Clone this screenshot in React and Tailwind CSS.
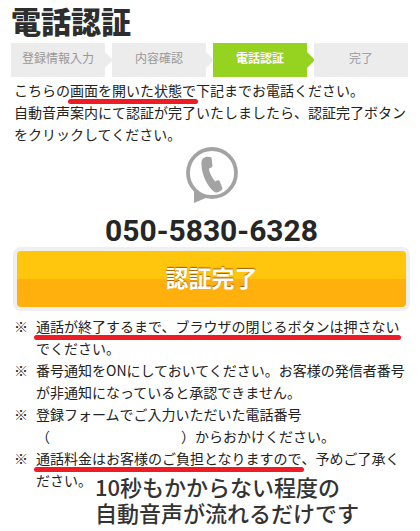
import React from 'react'

const steps = [
    { label: '登録情報入力', active: false },
    { label: '内容確認', active: false },
    { label: '電話認証', active: true },
    { label: '完了', active: false },
]

// text with a thick red marker line under it
function Marked({ children }) {
    return (
        <span className="relative inline-block">
            {children}
            <span className="absolute -left-0.5 -right-0.5 -bottom-[3px] h-[5px] rounded-full bg-[#ee1c25]" />
        </span>
    )
}

function Note({ children }) {
    return (
        <li className="flex">
            <span className="w-[22px] shrink-0">※</span>
            <p className="flex-1">{children}</p>
        </li>
    )
}

function PhoneIcon() {
    return (
        <svg viewBox="0 0 52 56" className="w-[52px] h-14" aria-hidden="true">
            <path d="M8 42 L8 56 L22 50 Z" fill="#a3a3a3" />
            <circle cx="26" cy="26" r="24" fill="#fff" stroke="#a3a3a3" strokeWidth="3.8" />
            <path
                d="M17.5 11 C19.5 9.6 23.5 9.4 25.5 10.4 L26.5 19 C26 20.4 24.6 21 22.8 21.6 C23.5 26 26 31 29.2 34.6 C30.6 33.6 32 33 33.4 33.6 L36.6 41.6 C35.2 44.4 32 46 29 45.2 C21 40.4 15.4 26.4 15.4 16.5 C15.4 14 16 12.2 17.5 11 Z"
                fill="#a3a3a3"
            />
        </svg>
    )
}

export default function App() {
    return (
        <main className="bg-white pl-[11px] pr-3 pt-0.5 text-sm leading-[22px] text-[#222] font-['Noto_Sans_CJK_JP',sans-serif]">
            <h1 className="h-[41px] text-[30px] leading-9 font-black text-[#2e2e2e]">電話認証</h1>

            <ol className="grid grid-cols-4 gap-[7px]">
                {steps.map((step, i) => (
                    <li
                        key={step.label}
                        aria-current={step.active ? 'step' : undefined}
                        className={`relative h-[34px] text-center text-xs leading-[30px] ${
                            step.active ? 'bg-[#96d220] font-bold text-white' : 'bg-[#ececec] text-[#999]'
                        }`}
                    >
                        {step.label}
                        {i < steps.length - 1 && (
                            <span
                                className={`absolute left-full top-[9px] border-y-8 border-l-8 border-y-transparent ${
                                    step.active ? 'border-l-[#96d220]' : 'border-l-[#ececec]'
                                }`}
                            />
                        )}
                    </li>
                ))}
            </ol>

            <div className="mt-0.5 pl-[3px]">
                <p>
                    こちらの<Marked>画面を開いた状態で</Marked>下記までお電話ください。
                </p>
                <p>自動音声案内にて認証が完了いたしましたら、認証完了ボタンをクリックしてください。</p>
            </div>

            <div className="mt-0.5 flex flex-col items-center pl-1">
                <PhoneIcon />
                <p className="mt-2.5 text-[30px] leading-9 font-bold text-[#262626] font-[Roboto,sans-serif]">
                    050-5830-6328
                </p>
            </div>

            <button
                type="button"
                className="ml-0.5 -mt-0.5 flex h-16 w-full items-center justify-center rounded-lg border-4 border-[#efefef] bg-[linear-gradient(#ffc60d_50%,#ffb00d_50%)] bg-origin-border pb-1 text-[23px] font-bold text-white [text-shadow:0_-1px_1px_#a85c00]"
            >
                認証完了
            </button>

            <ul className="mt-1 pl-[3px]">
                <Note>
                    <Marked>通話が終了するまで、ブラウザの閉じるボタンは押さない</Marked>でください。
                </Note>
                <Note>番号通知をONにしておいてください。お客様の発信者番号が非通知になっていると承認できません。</Note>
                <Note>
                    登録フォームでご入力いただいた電話番号
                    <br />
                    （<span className="inline-block w-[131px]" />）からおかけください。
                </Note>
                <Note>
                    <Marked>通話料金はお客様のご負担となりますので</Marked>、予めご了承ください。
                </Note>
            </ul>

            <p className="relative -mt-[18px] pl-[84px] text-[22px] leading-[26px] font-medium text-[#333]">
                10秒もかからない程度の
                <br />
                自動音声が流れるだけです
            </p>
        </main>
    )
}
